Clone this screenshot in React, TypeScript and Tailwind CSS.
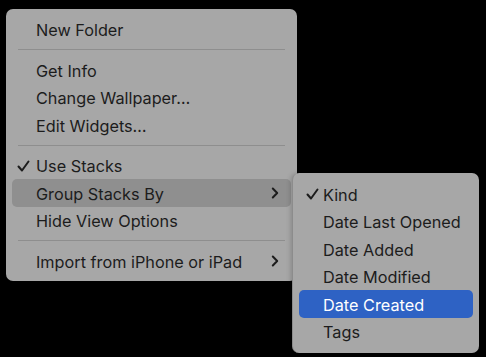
import React from 'react'

type Item =
  | { kind: 'sep' }
  | { kind: 'item'; label: string; checked?: boolean; submenu?: boolean; active?: boolean }

const MAIN: Item[] = [
  { kind: 'item', label: 'New Folder' },
  { kind: 'sep' },
  { kind: 'item', label: 'Get Info' },
  { kind: 'item', label: 'Change Wallpaper…' },
  { kind: 'item', label: 'Edit Widgets…' },
  { kind: 'sep' },
  { kind: 'item', label: 'Use Stacks', checked: true },
  { kind: 'item', label: 'Group Stacks By', submenu: true, active: true },
  { kind: 'item', label: 'Hide View Options' },
  { kind: 'sep' },
  { kind: 'item', label: 'Import from iPhone or iPad', submenu: true },
]

// submenu de "Group Stacks By"
const SUB = [
  { label: 'Kind', checked: true },
  { label: 'Date Last Opened' },
  { label: 'Date Added' },
  { label: 'Date Modified' },
  { label: 'Date Created', selected: true },
  { label: 'Tags' },
]

const Check = ({ className }: { className?: string }) => (
  <svg width="13" height="12" viewBox="0 0 13 12" className={className}>
    <path d="M1.5 6.5 L5 10.5 L11.5 1.5" fill="none" stroke="currentColor" strokeWidth="2" strokeLinecap="round" strokeLinejoin="round" />
  </svg>
)

const Chevron = () => (
  <svg width="8" height="12" viewBox="0 0 8 12" className="text-[#1c1c1c]">
    <path d="M1.8 1.5 L6.2 6 L1.8 10.5" fill="none" stroke="currentColor" strokeWidth="2" strokeLinecap="round" strokeLinejoin="round" />
  </svg>
)

export default function App() {
  return (
    <div
      className="relative w-[486px] h-[357px] bg-black overflow-hidden"
      style={{ fontFamily: 'Inter, "Noto Sans", sans-serif' }}>
      {/* main menu */}
      <div className="ml-[6px] mt-[9px] w-[291px] rounded-[7px] bg-[#a7a7a7] px-[6px] pt-[6.5px] pb-[6.5px] text-[16.25px] text-[#1c1c1c]">
        {MAIN.map((it, i) =>
          it.kind === 'sep' ? (
            <div key={i} className="h-[13px] flex items-center px-[6px]">
              <div className="h-px w-full bg-[#8e8e8e]" />
            </div>
          ) : (
            <div
              key={i}
              className={
                'relative h-[27.5px] flex items-center pl-[24px] pr-[12px] rounded-[5px] ' +
                (it.active ? 'bg-[#8f8f8f]' : '')
              }>
              {it.checked && <Check className="absolute left-[5px] top-[8px] text-[#1c1c1c]" />}
              <span className="flex-1 leading-none pt-[2px]">{it.label}</span>
              {it.submenu && <Chevron />}
            </div>
          )
        )}
      </div>

      {/* submenu */}
      <div className="absolute left-[292px] top-[173px] w-[187px] rounded-[7px] bg-[#a7a7a7] border-l border-[#8c8c8c] px-[6px] pt-[7px] pb-[8px] text-[16.25px] text-[#1c1c1c] shadow-[-2px_0_4px_rgba(0,0,0,0.15)]">
        {SUB.map((s) => (
          <div
            key={s.label}
            className={
              'relative h-[27.5px] flex items-center pl-[24px] rounded-[5px] ' +
              (s.selected ? 'bg-[#2e62c4] text-white' : '')
            }>
            {s.checked && <Check className="absolute left-[7px] top-[8px] text-[#1c1c1c]" />}
            <span className="leading-none pt-[2px]">{s.label}</span>
          </div>
        ))}
      </div>
    </div>
  )
}
